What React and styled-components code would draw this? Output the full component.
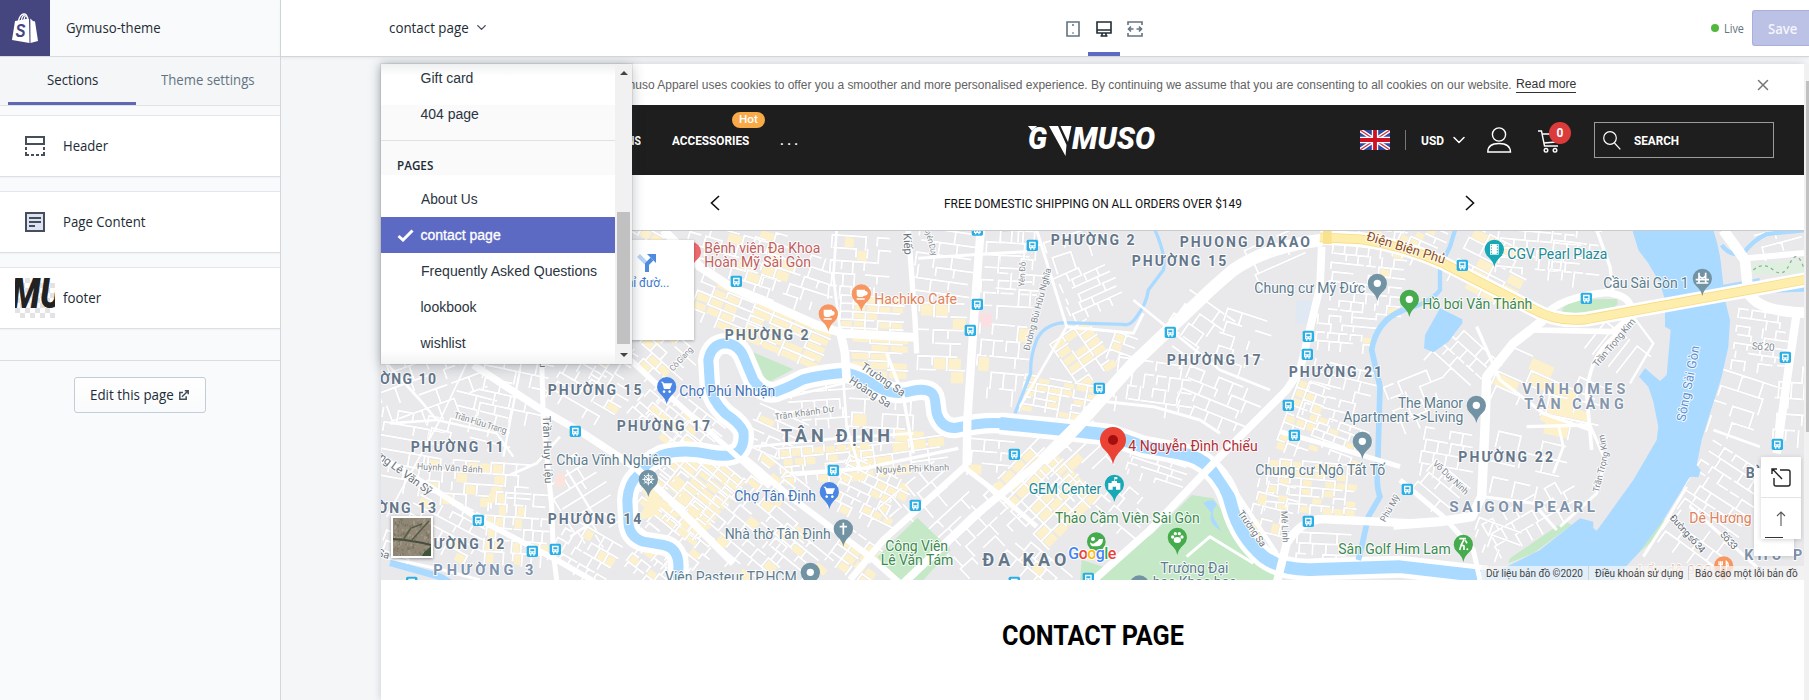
import React, { useLayoutEffect, useRef, useState } from 'react';
import styled, { createGlobalStyle, css } from 'styled-components';
import { ChevronDown, X } from 'lucide-react';

const Global = createGlobalStyle`
  * { box-sizing: border-box; }
  body { margin: 0; background: #fff; overflow: hidden; font-family: "Open Sans", "Noto Sans", sans-serif; color: #212b36; }
  svg { display: block; }
`;

const ui = '"Open Sans", "Noto Sans", sans-serif';
const arial = '"Liberation Sans", Arial, sans-serif';
const roboto = 'Roboto, "Noto Sans", sans-serif';

/* ---------- fitted text ---------- */
const FitBox = styled.span`
  display: inline-block;
  flex: none;
  width: ${(p) => p.$w}px;
  white-space: nowrap;
`;
const FitInner = styled.span`
  display: inline-block;
  transform-origin: 0 50%;
`;
function Fit({ w, children }) {
  const ref = useRef(null);
  const [scale, setScale] = useState(1);
  useLayoutEffect(() => {
    const natural = ref.current.offsetWidth;
    if (natural) setScale(w / natural);
  }, [w]);
  return (
    <FitBox $w={w}>
      <FitInner ref={ref} style={{ transform: `scaleX(${scale})` }}>{children}</FitInner>
    </FitBox>
  );
}

/* ---------- shell ---------- */
const Shell = styled.div`
  display: grid;
  grid-template-columns: 281px 1fr;
  width: 1809px;
  height: 700px;
  overflow: hidden;
`;
const Sidebar = styled.aside`
  display: flex;
  flex-direction: column;
  background: #f9fafb;
  border-right: 1px solid #d3d8de;
`;
const Brand = styled.header`
  display: flex;
  align-items: center;
  height: 57px;
  border-bottom: 1px solid #d8dce1;
  font-size: 14px;
  line-height: 20px;
`;
const BrandTile = styled.div`
  display: grid;
  place-items: center;
  width: 50px;
  height: 56px;
  margin-right: 16px;
  background: #45457f;
`;
const Tabs = styled.nav`
  display: grid;
  grid-template-columns: 128px 128px;
  column-gap: 8px;
  padding: 0 8px;
  height: 49px;
  background: #f4f6f8;
  border-bottom: 1px solid #dfe3e8;
`;
const Tab = styled.div`
  display: flex;
  justify-content: center;
  padding-top: 13px;
  font-size: 14px;
  line-height: 19px;
  color: ${(p) => (p.$active ? '#212b36' : '#637381')};
  border-bottom: ${(p) => (p.$active ? '3px solid #6068b4' : '0')};
`;
const Sections = styled.div`
  display: flex;
  flex-direction: column;
  gap: 14px;
  padding: 9px 0 31px;
  border-bottom: 1px solid #dadee3;
`;
const Section = styled.div`
  display: flex;
  align-items: center;
  height: 62px;
  padding-left: 15px;
  background: #fff;
  border-top: 1px solid #e3e6ea;
  border-bottom: 1px solid #dcdfe3;
  box-shadow: 0 1px 1px rgba(33, 43, 54, 0.04);
  font-size: 14px;
`;
const SectionName = styled.div`
  display: flex;
  padding-bottom: 2px;
`;
const SectionIcon = styled.div`
  display: grid;
  place-items: center;
  width: 40px;
  height: 40px;
  margin-right: 8px;
  overflow: hidden;
`;
const EditButton = styled.button`
  display: flex;
  align-items: center;
  gap: 5px;
  width: 132px;
  height: 36px;
  margin: 16px 0 0 74px;
  padding: 0 0 1px 15px;
  border: 1px solid #c4cdd5;
  border-radius: 3px;
  background: linear-gradient(#fff, #f9fafb);
  font: 14px ${ui};
  color: #212b36;
`;

const Main = styled.main`
  display: flex;
  flex-direction: column;
  min-width: 0;
  background: #f4f6f8;
`;
const TopBar = styled.header`
  position: relative;
  z-index: 3;
  display: flex;
  align-items: center;
  height: 57px;
  padding-left: 108px;
  background: #fff;
  border-bottom: 1px solid #d3d5d8;
  box-shadow: 0 1px 3px rgba(33, 43, 54, 0.08);
`;
const PagePicker = styled.div`
  display: flex;
  align-items: center;
  gap: 5px;
  width: 668px;
  padding-bottom: 2px;
  font-size: 14px;
`;
const Device = styled.div`
  display: flex;
  justify-content: center;
  align-items: center;
  width: 32px;
  height: 56px;
  margin-right: -1px;
  padding-top: ${(p) => (p.$active ? '6px' : '2px')};
  color: ${(p) => (p.$active ? '#212b36' : '#637381')};
  border-bottom: ${(p) => (p.$active ? '4px solid #5c6ac4' : '0')};
`;
const Status = styled.div`
  display: flex;
  align-items: center;
  gap: 5px;
  margin-left: auto;
  font-size: 12.5px;
  color: #637381;
`;
const Dot = styled.i`
  width: 8px;
  height: 8px;
  border-radius: 50%;
  background: #50b83c;
`;
const Save = styled.button`
  flex: none;
  width: 57px;
  height: 36px;
  margin-left: 8px;
  padding: 0 0 0 15px;
  border: 1px solid #a9afdd;
  border-right: 0;
  border-radius: 3px 0 0 3px;
  background: #bcc1e6;
  font: 600 14px ${ui};
  text-align: left;
  color: #f5f6fc;
`;

/* ---------- preview ---------- */
const Stage = styled.div`
  position: relative;
  display: flex;
  flex: 1;
  padding: 7px 0 0 100px;
`;
const Frame = styled.div`
  width: 1423px;
  background: #fff;
  box-shadow: 0 0 8px rgba(33, 43, 54, 0.2);
`;
const PageScroll = styled.div`
  width: 5px;
  padding: 17px 0 0 2px;
  background: #f1f1f1;
`;
const PageThumb = styled.div`
  height: 351px;
  background: #c1c1c1;
`;
const Cookie = styled.div`
  display: flex;
  align-items: center;
  height: 41px;
  padding: 1px 32px 0 229px;
  font: 12px ${arial};
  color: #626262;
`;
const ReadMore = styled.span`
  margin-left: 4px;
  height: 16px;
  line-height: 15px;
  color: #333;
  border-bottom: 1px solid #333;
`;
const CloseIcon = styled.div`
  margin-left: auto;
  color: #777;
`;
const StoreHeader = styled.div`
  display: flex;
  align-items: center;
  height: 70px;
  padding: 0 30px 0 231px;
  background: #1e1e1e;
  font: 700 13px ${roboto};
  color: #fff;
`;
const NavItem = styled.div`
  position: relative;
  display: flex;
  margin-right: 31px;
`;
const Hot = styled.span`
  position: absolute;
  left: 60px;
  top: -21px;
  width: 33px;
  height: 16px;
  padding-left: 7px;
  border-radius: 8px;
  background: #f8aa49;
  font: 500 10.5px/16px ${roboto};
`;
const Dots = styled.div`
  width: 248px;
  letter-spacing: 3.4px;
`;
const HeaderTools = styled.div`
  display: flex;
  align-items: center;
  margin-left: auto;
`;
const Rule = styled.div`
  width: 1px;
  height: 20px;
  margin: 0 15px;
  background: #777;
`;
const ChevronWrap = styled.div`
  margin: 0 18px 0 5px;
`;
const CartWrap = styled.div`
  position: relative;
  margin: 2px 0 0 26px;
`;
const CartBadge = styled.span`
  position: absolute;
  left: 11px;
  top: -7px;
  width: 22px;
  height: 22px;
  border-radius: 50%;
  background: #dc3b3b;
  font: 700 12px/22px ${roboto};
  text-align: center;
`;
const SearchBox = styled.div`
  display: flex;
  align-items: center;
  gap: 13px;
  width: 180px;
  height: 36px;
  margin-left: 34px;
  padding-left: 8px;
  border: 1px solid #9b9b9b;
`;
const Announce = styled.div`
  display: flex;
  align-items: center;
  justify-content: space-between;
  height: 55px;
  padding: 1px 329px 0;
  font: 400 13px ${roboto};
  color: #111;
`;
const MapBox = styled.div`
  position: relative;
  height: 350px;
  overflow: hidden;
  border-top: 1px solid #c9cacd;
`;
const PlaceCard = styled.div`
  position: absolute;
  left: 10px;
  top: 9px;
  width: 303px;
  height: 100px;
  display: flex;
  flex-direction: column;
  align-items: flex-end;
  padding: 13px 25px 0 0;
  background: #fff;
  box-shadow: 0 1px 3px rgba(0, 0, 0, 0.3);
  font: 12px ${roboto};
  color: #3c78d0;
`;
const TurnIcon = styled.div`
  margin: 0 12px 4px 0;
`;
const Satellite = styled.div`
  position: absolute;
  left: 10px;
  bottom: 22px;
  border: 2px solid #fff;
  box-shadow: 0 1px 3px rgba(0, 0, 0, 0.4);
`;
const Credits = styled.div`
  position: absolute;
  right: 0;
  bottom: 0;
  display: flex;
  align-items: center;
  height: 14px;
  padding: 0 6px 0 5px;
  background: rgba(245, 245, 245, 0.74);
  font: 10px ${roboto};
  color: #444;
`;
const CreditRule = styled.i`
  width: 1px;
  height: 14px;
  margin: 0 6px 0 5px;
  background: #ccd3dc;
`;
const ControlBack = styled.div`
  position: absolute;
  left: 1373px;
  top: 237px;
  width: 40px;
  height: 88px;
  background: #fff;
  box-shadow: 0 1px 4px rgba(0, 0, 0, 0.15);
`;
const Controls = styled.div`
  position: absolute;
  left: 1380px;
  top: 226px;
  width: 40px;
  background: #fff;
  box-shadow: 0 1px 5px rgba(0, 0, 0, 0.18);
`;
const Control = styled.div`
  display: grid;
  place-items: center;
  height: 41px;
  border-bottom: ${(p) => (p.$last ? '0' : '1px solid #e4e4e4')};
`;
const MinusMark = styled.div`
  position: absolute;
  left: 4px;
  top: 80px;
  width: 18px;
  height: 1px;
  background: #333;
`;
const Title = styled.h1`
  display: flex;
  justify-content: center;
  margin: 0;
  padding-top: 40px;
  font: 700 27px/32px ${roboto};
  color: #000;
`;

/* ---------- menu ---------- */
const Menu = styled.div`
  position: absolute;
  z-index: 2;
  left: 100px;
  top: 7px;
  display: flex;
  width: 251px;
  height: 300px;
  background: #fff;
  box-shadow: 0 0 0 1px rgba(33, 43, 54, 0.08), 0 2px 12px rgba(33, 43, 54, 0.3);
`;
const MenuList = styled.div`
  display: flex;
  flex-direction: column;
  width: 234px;
  background:
    linear-gradient(rgba(33, 43, 54, 0.07), transparent 12px) no-repeat,
    linear-gradient(to top, rgba(33, 43, 54, 0.06), transparent 14px) no-repeat,
    linear-gradient(transparent 41px, #fafafa 41px, #fafafa 111px, transparent 111px);
  font: 14px ${arial};
`;
const MenuItem = styled.div`
  display: flex;
  flex: none;
  align-items: center;
  height: 36px;
  margin-top: ${(p) => (p.$first ? '-4px' : '0')};
  padding-left: 39.5px;
  color: #2b3541;
  ${(p) => p.$selected && css`
    padding-left: 15.5px;
    gap: 7px;
    background: #5c6ac4;
    color: #fff;
    -webkit-text-stroke: 0.3px #fff;
  `}
`;
const MenuHeading = styled.div`
  flex: none;
  height: 41px;
  margin-top: 8px;
  padding: 16px 0 0 16px;
  border-top: 1px solid #dfe1e4;
  font: 600 12px/17px ${ui};
  color: #212b36;
`;
const MenuScroll = styled.div`
  display: flex;
  flex-direction: column;
  align-items: center;
  width: 17px;
  background: #f1f1f1;
`;
const Arrow = styled.i`
  flex: none;
  width: 0;
  height: 0;
  border: 4px solid transparent;
  ${(p) => (p.$up ? 'border-bottom-color: #444; margin-top: 3px;' : 'border-top-color: #444; margin-top: 9px;')}
`;
const MenuThumb = styled.div`
  width: 13px;
  height: 132px;
  margin-top: 137px;
  background: #c1c1c1;
`;

/* ---------- map ---------- */
// Map drawing uses three units per pixel, split in four horizontal tiles.
const T = { a: [0, 360], b: [780, 0], c: [1890, 0], d: [3090, 0] };
const inTile = (t) => `translate(${T[t][0]} ${T[t][1]})`;

function rng(seed) {
  let s = seed * 9301 + 49297;
  return () => {
    s = (s * 1103515245 + 12345) % 2147483648;
    return s / 2147483648;
  };
}

// tile, centre x, centre y, width, height, angle, cell width, cell height, built-up
const districts = [
  ['a', 190, 130, 330, 240, -20, 52, 46, 0], ['a', 120, 330, 200, 220, 10, 46, 40, 0], ['a', 300, 250, 240, 170, 14, 60, 42, 0],
  ['a', 420, 130, 170, 230, 12, 48, 38, 0], ['a', 330, 430, 320, 130, 4, 38, 34, .35], ['a', 230, 560, 240, 160, 28, 36, 32, .1],
  ['a', 440, 560, 190, 200, 4, 28, 36, .25], ['a', 640, 480, 150, 260, -32, 50, 40, 0], ['a', 640, 640, 180, 150, 30, 30, 36, .2],
  ['a', 660, 170, 230, 150, 30, 42, 28, .12], ['a', 730, 60, 160, 130, -58, 40, 30, .3], ['a', 950, 250, 210, 120, 38, 34, 26, .12],
  ['a', 950, 470, 210, 230, 38, 44, 22, .7], ['a', 850, 680, 150, 100, 38, 34, 28, .2], ['a', 110, 640, 160, 90, 20, 46, 30, 0],
  ['b', 90, 420, 160, 180, 42, 40, 30, .3], ['b', 100, 590, 180, 120, 40, 38, 24, .3],
  ['b', 80, 50, 190, 80, 30, 36, 32, .3], ['b', 310, 90, 280, 170, 16, 50, 34, .1], ['b', 300, 265, 220, 140, 22, 44, 28, .6],
  ['b', 470, 350, 250, 140, 23, 62, 26, .8], ['b', 470, 170, 250, 170, 18, 44, 34, .25], ['b', 690, 150, 180, 200, 4, 34, 38, .1],
  ['b', 730, 290, 200, 120, 3, 38, 24, .7], ['b', 750, 410, 180, 130, 3, 58, 26, .7], ['b', 930, 140, 150, 220, 8, 54, 38, 0],
  ['b', 935, 360, 140, 220, 2, 44, 40, .15], ['b', 1120, 160, 130, 260, 3, 52, 38, .05], ['b', 1110, 440, 140, 250, 5, 38, 48, .05],
  ['b', 560, 560, 240, 150, -4, 38, 28, 0], ['b', 430, 650, 150, 150, 24, 52, 26, .1], ['b', 760, 620, 210, 160, 3, 46, 42, .05],
  ['b', 800, 710, 350, 90, -8, 54, 34, .65], ['b', 580, 730, 260, 110, -5, 34, 28, .5], ['b', 190, 800, 230, 220, 39, 46, 22, .7],
  ['b', 140, 970, 220, 160, 39, 38, 28, .2], ['b', 360, 940, 240, 230, 40, 42, 34, .1], ['b', 430, 790, 150, 110, 38, 42, 26, .3],
  ['b', 710, 830, 200, 180, 26, 34, 28, .5], ['b', 690, 1020, 170, 120, 36, 38, 30, .6], ['b', 870, 850, 210, 140, -40, 54, 42, 0],
  ['b', 1040, 930, 230, 200, -43, 48, 38, .05], ['b', 500, 1010, 170, 120, 39, 44, 28, .2], ['b', 1080, 720, 130, 120, 5, 44, 36, .1],
  ['c', 60, 140, 130, 230, 4, 34, 46, 0], ['c', 270, 210, 170, 150, -24, 40, 24, 0], ['c', 230, 100, 170, 120, -18, 58, 50, 0],
  ['c', 260, 400, 150, 170, -35, 44, 28, .6], ['c', 370, 390, 80, 90, 20, 34, 28, .6], ['c', 170, 540, 210, 120, 10, 38, 22, .6],
  ['c', 450, 510, 210, 170, 8, 38, 40, 0], ['c', 590, 340, 180, 190, 35, 54, 42, 0], ['c', 730, 380, 160, 190, 18, 46, 38, 0],
  ['c', 650, 550, 230, 150, 22, 46, 36, 0], ['c', 840, 110, 180, 120, -24, 54, 40, 0], ['c', 1090, 170, 200, 290, 6, 36, 28, .08],
  ['c', 1030, 340, 160, 100, 5, 34, 26, .1], ['c', 1010, 520, 170, 170, 14, 46, 34, 0], ['c', 910, 590, 100, 210, 20, 32, 28, .55],
  ['c', 1020, 660, 170, 100, 20, 34, 22, .25], ['c', 930, 800, 260, 150, 5, 34, 26, .6], ['c', 820, 880, 130, 180, 14, 30, 38, .15],
  ['c', 120, 820, 200, 240, -45, 44, 32, .6], ['c', 250, 720, 230, 130, -43, 54, 34, .05], ['c', 470, 755, 180, 80, 18, 42, 20, 0],
  ['c', 370, 870, 160, 130, 40, 50, 36, 0], ['c', 110, 1040, 200, 90, 40, 40, 32, .15], ['c', 970, 980, 160, 80, 3, 40, 32, 0],
  ['d', 60, 70, 130, 120, 24, 32, 26, .3], ['d', 270, 150, 200, 190, 27, 52, 36, .7], ['d', 400, 110, 220, 150, 5, 40, 28, .05],
  ['d', 530, 110, 160, 170, 7, 36, 44, 0], ['d', 170, 400, 210, 130, 42, 38, 36, 0], ['d', 70, 530, 200, 140, -22, 46, 38, 0],
  ['d', 150, 700, 170, 130, 10, 38, 36, 0], ['d', 650, 400, 170, 110, 38, 30, 100, 0], ['d', 430, 510, 300, 160, 24, 78, 42, .45],
  ['d', 520, 600, 170, 120, 12, 80, 60, .6], ['d', 380, 740, 210, 170, 13, 68, 46, 0], ['d', 400, 900, 280, 130, -30, 36, 38, 0],
  ['d', 130, 810, 150, 110, 40, 44, 42, 0], ['d', 1080, 360, 150, 170, 8, 40, 26, 0], ['d', 1020, 570, 180, 200, 18, 66, 48, 0],
  ['d', 1180, 560, 110, 240, 4, 38, 48, 0], ['d', 970, 800, 200, 200, 33, 40, 34, 0], ['d', 900, 960, 220, 150, 36, 54, 38, 0],
  ['d', 290, 970, 150, 110, 20, 44, 36, 0], ['d', 1130, 60, 120, 60, -15, 60, 40, 0],
];

function District({ spec, seed }) {
  const [t, x, y, w, h, a, cw, ch, built] = spec;
  const r = rng(seed + 3);
  const blocks = [];
  let d = '';
  const cols = Math.round(w / cw);
  const rows = Math.round(h / ch);
  for (let i = 0; i < cols; i++) {
    for (let j = 0; j < rows; j++) {
      const bx = -w / 2 + i * cw + (j % 2) * cw * 0.2 * (built > 0.5 ? 0 : 1);
      const by = -h / 2 + j * ch;
      if (r() < built) blocks.push(<rect key={`${i}-${j}`} x={bx + 5} y={by + 5} width={cw - 7} height={ch - 7} fill="#fdf1cb" />);
      if (r() < 0.79) d += `M${bx},${by}h${cw * (r() < 0.25 ? 0.65 : 1)}`;
      if (r() < 0.72) d += `M${bx},${by}v${ch * (r() < 0.25 ? 0.6 : 1)}`;
    }
  }
  return (
    <g transform={`${inTile(t)} translate(${x} ${y}) rotate(${a})`}>
      {blocks}
      <path d={d} stroke="#dcdce0" strokeWidth="7.5" fill="none" />
      <path d={d} stroke="#fff" strokeWidth="6" fill="none" strokeLinecap="round" />
    </g>
  );
}

const areas = [
  ['b', 'M370,397 L425,420 L490,448 L410,490Z', '#c5e9c6'],
  ['b', 'M862,893 L962,990 L880,1080 L800,1080 L742,1010Z', '#c5e9c6'],
  ['c', 'M575,825 L640,835 L665,870 L700,950 L760,1010 L840,1050 L820,1080 L240,1080 L245,1020 L310,1040 L460,940Z', '#c5e9c6'],
  ['c', 'M610,850 Q640,830 650,855 Q630,875 645,900 L665,935 L640,915 Q625,895 635,880Z', '#aadaff'],
  ['d', 'M485,275 Q490,245 560,238 L650,237 Q660,255 640,262 L500,285Z', '#c5e9c6'],
  ['d', 'M430,285 L470,262 L470,295Z', '#c5e9c6'],
  ['d', 'M325,1030 L330,1015 L480,912 L500,905 L515,915 L400,1000Z', '#c5e9c6'],
  ['d', 'M715,1000 L720,975 L785,900 L800,905 L760,960Z', '#c5e9c6'],
  ['d', 'M1055,130 L1212,122 L1212,160 L1060,165Z', '#dff0e0'],
  ['a', 'M805,540 L850,440 L880,490 L850,530Z', '#fdf1cb'],
  ['b', 'M1045,280 h40 v40 h-30z', '#fbdfe2'],
  ['a', 'M560,400 h25 v40 h-35z', '#fbe4dd'],
  ['c', 'M890,240 h45 v70 h-50z', '#dfe8f3'],
];
const canalB = 'M145,1100 L145,1050 Q150,985 100,975 L40,965 Q-5,950 -5,900 L-8,840 Q-5,790 25,765 Q50,725 95,705 Q160,685 240,703 Q300,715 325,695 Q345,675 340,635 Q330,610 285,580 Q245,540 240,500 L235,420 Q245,370 290,370 Q330,375 345,420 L370,480 Q400,525 440,515 Q480,500 520,478 Q580,462 650,458 Q700,470 740,500 Q790,530 850,512 Q910,500 915,540 L920,580 Q935,625 975,624 Q1060,605 1120,610';
const canalC = 'M0,610 L200,630 L330,645 L430,680 L540,700 Q600,710 630,745 Q680,790 695,860 Q720,950 790,1010 Q850,1055 950,1048 L1200,1040 L1460,1070';
const bigRiver = 'M697,30 L940,30 Q960,90 965,150 L975,240 L990,300 L985,380 L965,470 L930,580 L905,660 L890,735 L902,750 L895,772 L870,770 L790,900 L715,1000 L640,1080 L240,1080 L330,1035 L420,990 L540,895 L580,905 L580,925 L590,932 L610,905 L700,780 L770,660 L775,620 L760,545 L745,500 L717,470 L735,445 L780,483 L800,465 L812,330 L795,320 L795,240 L780,190 L745,130 L715,90Z';
const streams = [
  ['c', 'M465,30 Q500,110 490,150 L445,210 Q440,250 410,290 Q390,320 370,313 L190,308 Q130,315 110,360 Q90,410 92,460 L45,580', 10],
  ['c', 'M1210,270 Q1130,300 1115,390 L1140,500 L1133,740 Q1128,800 1140,830 L1105,890 L1085,980 L1075,1020', 17],
  ['d', 'M165,30 L150,80 L120,140 L120,210 Q90,250 0,275', 13],
  ['d', 'M965,75 Q990,110 1030,100 Q1060,60 1100,42 L1220,30', 13],
  ['d', 'M960,205 L1080,182', 17], ['d', 'M1070,212 L1220,208', 14],
  ['a', 'M60,668 L210,710 L260,740', 20],
];
const roads = [
  ['a', 'M310,75 L500,200 L640,280 L800,385 L900,480 L1090,670', 22], ['a', 'M0,330 L180,440 L330,540 L560,660 L700,740', 17],
  ['a', 'M515,60 L520,240 L545,500 L550,640 L560,720', 15], ['a', 'M760,40 L900,170 L1080,330 L1200,440', 17],
  ['a', 'M420,405 L500,370 L570,290', 8], ['a', 'M450,90 L400,350', 7], ['a', 'M50,70 L150,180 L200,240 L60,250', 8],
  ['a', 'M40,650 L220,690 L330,720', 9], ['a', 'M200,240 L380,280 L430,350', 7], ['a', 'M290,70 L210,240 L50,530', 5], ['a', 'M590,390 L680,540 L600,590', 7],
  ['b', 'M100,30 L210,140 L300,200 L560,315 L640,340 L860,352', 26], ['b', 'M630,330 L645,400 L650,480', 26],
  ['b', 'M1052,30 L1035,250 L1012,600 L1010,735', 25], ['b', 'M1010,735 L760,960 L660,1080', 20], ['b', 'M1000,740 L1110,825 L1220,920', 15],
  ['b', 'M345,715 L480,830 L600,920 L720,1010 L810,1090', 19], ['b', 'M835,30 L855,300 L860,400', 16], ['b', 'M770,400 L820,530 L850,700', 10],
  ['b', 'M480,760 L700,745 L985,685', 10], ['b', 'M370,680 L620,655 L850,640', 8], ['b', 'M620,30 L610,170 L630,330', 8], ['b', 'M865,115 L1100,100 L1190,95', 9],
  ['b', 'M640,480 L650,620 L690,750', 8], ['b', 'M400,540 L480,530 L640,490', 7],
  ['c', 'M965,60 Q800,80 700,150 Q640,200 600,240 L400,430 L230,620 L130,720', 38], ['c', 'M140,710 L-80,890 L-290,1090', 24],
  ['c', 'M270,1090 L450,930 L650,720 L860,510 L900,450 L960,200 L965,80', 23], ['c', 'M110,30 L200,320 L400,340 L430,280', 9],
  ['c', 'M320,545 L460,560 L600,600 L660,640', 9], ['c', 'M830,1090 L860,970 Q900,905 960,897 L1240,910', 25], ['c', 'M840,635 L1000,680 L1200,740', 15],
  ['c', 'M650,730 L830,1000', 13], ['c', 'M200,320 L130,440 L60,560', 8], ['c', 'M560,1010 L630,950 L760,1030', 9], ['c', 'M400,240 L660,450 L810,510', 8],
  ['d', 'M-20,915 L120,905 L215,890 L245,830 L255,620 L260,470 L340,370 L430,300', 28], ['d', 'M430,290 Q480,230 620,218 Q680,225 690,255', 22],
  ['d', 'M400,330 L640,335 L690,290', 17], ['d', 'M970,30 L1035,120 L1045,220 Q1080,275 1212,278', 32], ['d', 'M1190,280 L1165,450 L1130,700', 25],
  ['d', 'M575,690 L560,520 Q570,420 620,370 L700,290', 11], ['d', 'M570,615 L615,720 L590,820 L480,920', 9], ['d', 'M1040,115 L1220,98', 18],
  ['d', 'M0,780 L130,890 L220,990 L240,1080', 15], ['d', 'M250,830 L400,850 L470,930', 9], ['d', 'M230,320 L300,480 L430,580 L570,630', 10],
  ['d', 'M590,30 L630,140 L640,220', 10], ['d', 'M730,1010 L800,900 L860,800', 9], ['d', 'M870,860 L1080,1050', 10], ['d', 'M700,290 L760,370 L690,490', 7],
  ['d', 'M940,630 L1080,680', 8], ['d', 'M475,615 L490,680 L460,760', 8], ['d', 'M380,620 L570,615', 10],
];
const highway = 'M-240,52 L-120,58 Q20,80 130,130 L400,268 Q470,308 560,298 L760,262 L1222,178';

const slate = '#7293a3';
const blue = '#4a86e4';
const orange = '#f79661';
const green = '#45ab4c';
const teal = '#16a8b4';
const pins = [
  ['b', 694, 222, orange, 'cup'], ['b', 595, 282, orange, 'cup'], ['b', 110, 500, blue, 'cart'], ['b', 55, 778, slate, 'wheel'],
  ['b', 598, 815, blue, 'cart'], ['b', 640, 927, slate, 'cross'], ['b', 541, 1057, slate, 'dot'], ['b', 184, 95, '#ec6a6e', 'none'],
  ['c', 343, 793, teal, 'hall'], ['c', 532, 952, green, 'paw'], ['c', 1132, 190, slate, 'dot'], ['c', 1087, 664, slate, 'dot'], ['c', 418, 1095, slate, 'dot'],
  ['d', 283, 88, teal, 'film'], ['d', 907, 175, slate, 'bridge'], ['d', 28, 238, green, 'dot'], ['d', 229, 556, slate, 'dot'],
  ['d', 190, 973, green, 'golf'], ['d', 971, 1038, orange, 'fork'],
];
const buses = [
  ['b', 319, 184], ['b', 1042, 30], ['b', 1042, 253], ['b', 1021, 331], ['b', 1153, 703], ['b', 610, 751], ['b', 856, 856], ['b', 1153, 1087],
  ['c', 97, 76], ['c', 511, 337], ['c', 298, 505], ['c', 925, 349], ['c', 922, 403], ['c', 865, 556], ['c', 883, 646], ['c', 925, 904], ['c', 265, 1075],
  ['d', 187, 136], ['d', 559, 235], ['d', 1156, 412], ['d', 1132, 673], ['d', 22, 808],
  ['a', 616, 274], ['a', 325, 541], ['a', 487, 634], ['a', 556, 628], ['a', 125, 727],
];

const ward = '#64778a';
const poi = '#5e7d8e';
const road = '#6e7780';
// tile, x, baseline, width, text, size, colour, weight, rotation
const labels = [
  ['a', -70, 131, 268, 'PHƯỜNG 10', 42, ward, 700], ['a', 533, 165, 282, 'PHƯỜNG 15', 42, ward, 700], ['a', 740, 273, 280, 'PHƯỜNG 17', 42, ward, 700],
  ['a', 122, 336, 279, 'PHƯỜNG 11', 42, ward, 700], ['a', -82, 519, 280, 'PHƯỜNG 13', 42, ward, 700], ['a', 533, 552, 281, 'PHƯỜNG 14', 42, ward, 700],
  ['a', 122, 627, 281, 'PHƯỜNG 12', 42, ward, 700], ['a', 190, 705, 300, 'PHƯỜNG 3', 44, '#7c92ae', 700],
  ['a', 559, 376, 345, 'Chùa Vĩnh Nghiêm', 42, poi, 400], ['a', 885, 726, 395, 'Viện Pasteur TP.HCM', 42, poi, 400],
  ['a', 250, 233, 165, 'Trần Hữu Trang', 27, '#868b91', 400, 17], ['a', 140, 388, 198, 'Huỳnh Văn Bánh', 27, '#868b91', 400, 3],
  ['a', 518, 228, 203, 'Trần Huy Liệu', 33, road, 400, 88], ['a', -25, 320, 248, 'Đường Lê Văn Sỹ', 34, road, 400, 36], ['a', -22, 635, 80, 'ng Sa', 32, road, 400, 16],
  ['a', 909, 95, 90, 'Cô Giang', 25, '#868b91', 400, -47], ['a', 509, 35, 48, 'Kiệu', 28, road, 400, 89],
  ['b', 223, 99, 348, 'Bệnh viện Đa Khoa', 42, '#c1605d', 400], ['b', 223, 142, 320, 'Hoàn Mỹ Sài Gòn', 42, '#c1605d', 400],
  ['b', 733, 252, 248, 'Hachiko Cafe', 42, '#e0825a', 400], ['b', 284, 360, 252, 'PHƯỜNG 2', 42, ward, 700],
  ['b', 148, 528, 288, 'Chợ Phú Nhuận', 42, '#4374b8', 400], ['b', 453, 666, 327, 'TÂN ĐỊNH', 54, ward, 700],
  ['b', 313, 843, 245, 'Chợ Tân Định', 42, '#4374b8', 400], ['b', 284, 957, 318, 'Nhà thờ Tân Định', 42, poi, 400],
  ['b', 766, 992, 188, 'Công Viên', 42, '#3c8a50', 400], ['b', 752, 1035, 218, 'Lê Văn Tám', 42, '#3c8a50', 400],
  ['b', 1057, 1037, 252, 'ĐA KAO', 54, ward, 700], ['b', 435, 600, 180, 'Trần Khánh Dư', 27, '#868b91', 400, -8], ['b', 738, 759, 220, 'Nguyễn Phi Khanh', 27, '#868b91', 400, -2],
  ['b', 690, 445, 153, 'Trường Sa', 33, road, 400, 34], ['b', 655, 487, 142, 'Hoàng Sa', 33, road, 400, 33],
  ['b', 820, 40, 65, 'Kiếp', 34, road, 400, 87], ['b', 884, 28, 84, 'uyên Duy', 25, '#868b91', 400, 75], ['b', 1183, 200, 75, 'Yên Đỗ', 25, '#868b91', 400, -87],
  ['c', 152, 74, 252, 'PHƯỜNG 2', 42, ward, 700], ['c', 539, 81, 391, 'PHUONG DAKAO', 42, ward, 700], ['c', 395, 138, 284, 'PHƯỜNG 15', 42, ward, 700],
  ['c', 763, 219, 332, 'Chung cư Mỹ Đức', 42, poi, 400], ['c', 500, 434, 282, 'PHƯỜNG 17', 42, ward, 700], ['c', 866, 471, 280, 'PHƯỜNG 21', 42, ward, 700],
  ['c', 766, 765, 390, 'Chung cư Ngô Tất Tố', 42, poi, 400], ['c', 385, 693, 388, '4 Nguyễn Đình Chiểu', 42, '#b52d35', 400],
  ['c', 86, 822, 218, 'GEM Center', 42, '#1b8b98', 400], ['c', 165, 908, 434, 'Thảo Cầm Viên Sài Gòn', 42, '#3c8a50', 400],
  ['c', 481, 1059, 204, 'Trường Đại', 42, poi, 400], ['c', 458, 1100, 252, 'học Khoa học', 42, poi, 400],
  ['c', 1015, 1003, 337, 'Sân Golf Him Lam', 42, '#3c8a50', 400], ['c', 88, 393, 255, 'Đường Bùi Hữu Nghĩa', 27, '#7e8790', 400, -75],
  ['c', 712, 880, 125, 'Trường Sa', 29, road, 400, 55], ['c', 843, 873, 95, 'Mê Linh', 27, '#7e8790', 400, 87], ['c', 1155, 908, 90, 'Phú Mỹ', 27, '#7e8790', 400, -60],
  ['d', -103, 60, 245, 'Điện Biên Phủ', 39, '#8b4b20', 400, 17], ['d', 322, 117, 300, 'CGV Pearl Plaza', 42, '#1b8b98', 400],
  ['d', 610, 204, 256, 'Cầu Sài Gòn 1', 42, poi, 400], ['d', 67, 266, 330, 'Hồ bơi Văn Thánh', 42, '#3c8a50', 400],
  ['d', 367, 522, 309, 'VINHOMES', 43, '#8596ad', 700], ['d', 373, 567, 298, 'TÂN CẢNG', 43, '#8596ad', 700],
  ['d', -6, 563, 195, 'The Manor', 42, poi, 400], ['d', -170, 606, 360, 'Apartment >>Living', 42, poi, 400],
  ['d', 175, 726, 284, 'PHƯỜNG 22', 42, ward, 700], ['d', 148, 877, 437, 'SAIGON PEARL', 46, '#8092aa', 700],
  ['d', 868, 909, 187, 'Dê Hương', 42, '#e0825a', 400], ['d', 1037, 774, 44, 'BÌ', 42, ward, 700], ['d', 1033, 1020, 174, 'KHU P', 43, '#8092aa', 700],
  ['d', 855, 606, 230, 'Sông Sài Gòn', 38, '#5d8fd2', 400, -79], ['d', 1055, 388, 68, 'Số 20', 30, '#7e8790', 400, 4],
  ['d', 592, 443, 180, 'Trần Trọng Kim', 29, '#7e8790', 400, -50], ['d', 596, 818, 125, 'Trần Trọng', 27, '#7e8790', 400, -76], ['d', 622, 688, 46, 'Kim', 27, '#7e8790', 400, -103],
  ['d', 97, 733, 135, 'Võ Duy Ninh', 27, '#7e8790', 400, 43], ['d', 808, 895, 142, 'Đường số 34', 29, '#59636c', 400, 48], ['d', 959, 945, 62, 'Số 33', 29, '#59636c', 400, 48],
  ['d', 715, 1062, 220, 'Lẩu dê 909', 40, '#e9b79f', 400],
];

const glyphs = {
  dot: <circle r="11" fill="#fff" />,
  none: null,
  cup: <path d="M-14,-13h25v4q8,0 8,7t-11,7q-3,4-8,4h-6q-8,0-8-9zM-14,13h24v4h-24z" fill="#fff" />,
  cart: <path d="M-18,-15h7l3,5h25l-7,17h-18l-5,-17zM-8,11a4,4 0 1 0 .1,0M9,11a4,4 0 1 0 .1,0" fill="#fff" />,
  cross: <path d="M0,-19v36M-11,-7h22" stroke="#fff" strokeWidth="5" />,
  wheel: <g fill="none" stroke="#fff" strokeWidth="3"><circle r="12" /><circle r="3" /><path d="M0,-18v36M-18,0h36M-13,-13l26,26M13,-13l-26,26" /></g>,
  hall: <path d="M0,-22h9v7h-7v5h6v6h10v20h-13v-9h-10v9h-13v-20h10v-6h8z" fill="#fff" />,
  paw: <g fill="#fff"><ellipse cy="8" rx="11" ry="9" /><circle cx="-14" cy="-1" r="5" /><circle cx="14" cy="-1" r="5" /><circle cx="-6" cy="-11" r="5" /><circle cx="6" cy="-11" r="5" /></g>,
  film: <g><rect x="-13" y="-16" width="26" height="32" fill="#fff" /><path d="M-9,-14v28M9,-14v28" stroke={teal} strokeWidth="3" strokeDasharray="4 4" /></g>,
  bridge: <path d="M-10,-17v32M10,-17v32M-20,4h40M-18,14h36M-10,-8q10,14 20,0" stroke="#fff" strokeWidth="5" fill="none" />,
  golf: <g><path d="M-12,-17h20M2,-14l-8,15l8,4v12M-6,1l-5,16M6,-12l5,9" stroke="#fff" strokeWidth="5" fill="none" /><circle cx="12" cy="15" r="3" fill="#fff" /></g>,
  fork: <path d="M-9,-14v28M-14,-14v10h10v-10M8,14v-28q6,4 6,14h-6" stroke="#fff" strokeWidth="4" fill="none" />,
};

function CityMap() {
  return (
    <svg width="1423" height="349" viewBox="33 33 4269 1047">
      <rect x="33" y="30" width="4269" height="1050" fill="#e9e9ec" />
      {districts.map((d, i) => <District key={i} spec={d} seed={i} />)}
      {areas.map(([t, d, fill], i) => <path key={i} d={d} fill={fill} transform={inTile(t)} />)}
      <g fill="none" stroke="#fff" strokeLinejoin="round">
        <path d={canalB} transform={inTile('b')} strokeWidth="62" />
        <path d={canalC} transform={inTile('c')} strokeWidth="66" />
      </g>
      <g fill="none" stroke="#aadaff" strokeLinejoin="round">
        <path d={canalB} transform={inTile('b')} strokeWidth="30" />
        <path d={canalC} transform={inTile('c')} strokeWidth="38" />
        {streams.map(([t, d, w], i) => <path key={i} d={d} strokeWidth={w} transform={inTile(t)} />)}
      </g>
      <g fill="#aadaff" transform={inTile('d')}>
        <path d={bigRiver} />
        <path d="M120,265 L187,298 L187,310 L145,365 L100,397 L72,385 L75,345Z" />
      </g>
      <g fill="none" stroke="#fff" strokeLinejoin="round">
        {roads.map(([t, d, w], i) => <path key={i} d={d} strokeWidth={w} transform={inTile(t)} />)}
      </g>
      <g fill="none" transform={inTile('d')}>
        <path d={highway} stroke="#fff" strokeWidth="44" />
        <path d={highway} stroke="#f9dc86" strokeWidth="29" />
        <path d={highway} stroke="#feeeae" strokeWidth="24" />
        <path d="M-218,30v42" stroke="#f9e28f" strokeWidth="26" />
        <path d="M1060,150 q30,-25 60,0 t50,-20 t40,10" stroke="#86b98d" strokeWidth="4" strokeDasharray="9 10" />
      </g>
      {buses.map(([t, x, y], i) => (
        <g key={i} transform={`${inTile(t)} translate(${x} ${y})`}>
          <rect x="-17" y="-17" width="34" height="34" rx="5" fill="#29afe5" />
          <path d="M-10,-11h20v20h-3v4h-4v-4h-6v4h-4v-4h-3z" fill="#fff" />
          <path d="M-6,-6h12v6h-12zM-6,3h3v3h-3zM3,3h3v3h-3z" fill="#29afe5" />
        </g>
      ))}
      {pins.map(([t, x, y, color, glyph], i) => (
        <g key={i} transform={`${inTile(t)} translate(${x} ${y})`}>
          <path d="M0,53 Q-3,36 -19,22 A29,29 0 1 1 19,22 Q3,36 0,53Z" fill={color} />
          {glyphs[glyph]}
        </g>
      ))}
      <g transform="translate(2179 965)">
        <circle r="28" fill={green} />
        <path d="M-18,2q8,8 16,0q8,-3 10,-10h12q0,20-16,22h-16q-8-4-6-12z" fill="#fff" />
        <circle cx="-10" cy="-8" r="6" fill="#fff" />
      </g>
      <g transform="translate(2229 660)">
        <path d="M0,74 Q-4,50 -25,30 A39,39 0 1 1 25,30 Q4,50 0,74Z" fill="#ea4335" />
        <circle r="15" fill="#a50e0e" />
      </g>
      {labels.map(([t, x, y, w, text, size, color, weight, rot = 0], i) => (
        <text
          key={i}
          transform={`${inTile(t)} translate(${x} ${y}) rotate(${rot})`}
          textLength={w}
          fontFamily={roboto}
          fontSize={size}
          fontWeight={weight}
          fill={color}
          stroke="#fff"
          strokeOpacity=".85"
          strokeWidth="6"
          strokeLinejoin="round"
          paintOrder="stroke"
        >
          {text}
        </text>
      ))}
      <text x="2095" y="1018" textLength="144" fontFamily={roboto} fontSize="48" fontWeight="500" stroke="#fff" strokeWidth="6" paintOrder="stroke">
        <tspan fill="#4285f4">G</tspan><tspan fill="#ea4335">o</tspan><tspan fill="#fbbc05">o</tspan><tspan fill="#4285f4">g</tspan><tspan fill="#34a853">l</tspan><tspan fill="#ea4335">e</tspan>
      </text>
    </svg>
  );
}

/* ---------- drawings ---------- */
const Bag = () => (
  <svg width="26" height="30" viewBox="0 0 26 30">
    <path d="M3 8 17 5.5 17.5 30 0 27Z M18.3 5.5 21 8 23 8.5 26 28 18.5 30Z" fill="#fff" />
    <path d="M6.5 8Q8 1.5 11.5 1Q15 .5 15.5 6M9.5 7Q10 2.5 13 1.8M12 7Q13 0 16 5" fill="none" stroke="#fff" strokeWidth="1.3" />
    <text x="3.5" y="24" fontFamily={arial} fontSize="18" fontWeight="700" fontStyle="italic" fill="#45457f" textLength="10" lengthAdjust="spacingAndGlyphs">S</text>
  </svg>
);
const HeaderIcon = () => (
  <svg width="20" height="20" viewBox="0 0 20 20" fill="none" stroke="#454f5b" strokeWidth="2">
    <path d="M1 1H19V8H1Z" />
    <path d="M1 11V14M19 11V14M1 16V19H4M19 16V19H16M6 19H9M11 19H14" />
  </svg>
);
const ContentIcon = () => (
  <svg width="20" height="20" viewBox="0 0 20 20" stroke="#454f5b" strokeWidth="2">
    <path d="M1 1H19V19H1Z" fill="#dde3f0" />
    <path d="M4 6H16M4 10H16M4 14H10" />
  </svg>
);
const FooterThumb = () => (
  <svg width="40" height="40" viewBox="0 0 40 40">
    <defs>
      <pattern id="checks" width="10" height="10" patternUnits="userSpaceOnUse">
        <rect width="10" height="10" fill="#fff" /><path d="M0 0h5v5h-5zM5 5h5v5h-5z" fill="#e3e3e6" />
      </pattern>
    </defs>
    <rect width="40" height="40" fill="url(#checks)" />
    <text x="-4" y="30" fontFamily={roboto} fontSize="42" fontWeight="900" fontStyle="italic" fill="#222" textLength="51" lengthAdjust="spacingAndGlyphs">MU</text>
  </svg>
);
const External = () => (
  <svg width="10" height="10" viewBox="0 0 10 10" fill="none" stroke="#454f5b" strokeWidth="1.5">
    <path d="M4 2.5H.8V9.2H7.2V6.3M3 6.7 8.7 1.2M5.8.8H9.2V4.2" />
  </svg>
);
const Phone = () => (
  <svg width="14" height="16" viewBox="0 0 14 16" fill="none" stroke="currentColor" strokeWidth="1.6">
    <path d="M1 1H13V15H1Z" /><path d="M6 4H8M6.3 12H7.7" />
  </svg>
);
const Desktop = () => (
  <svg width="16" height="16" viewBox="0 0 16 16" fill="none" stroke="currentColor" strokeWidth="1.6">
    <path d="M1 1H15V12H1ZM1 9H15M4.5 15H11.5M6 12V15M10 12V15" />
  </svg>
);
const Wide = () => (
  <svg width="16" height="16" viewBox="0 0 16 16" fill="none" stroke="currentColor" strokeWidth="1.6">
    <path d="M1 4V1H15V4M1 12V15H15V12M6.5 8H1.5M9.5 8H14.5M4 5.5 1.5 8 4 10.5M12 5.5 14.5 8 12 10.5" />
  </svg>
);
const Logo = () => (
  <svg width="132" height="40" viewBox="0 -5 132 40" fill="#fff">
    <g fontFamily={roboto} fontWeight="900" fontStyle="italic" fontSize="32">
      <text x="0" y="24" textLength="19" lengthAdjust="spacingAndGlyphs">G</text>
      <text x="44" y="24" textLength="83" lengthAdjust="spacingAndGlyphs">MUSO</text>
    </g>
    <path d="M0 1H9L4 6Z" />
    <path d="M21 1H30L38.5 20 37.5 31Z M32.5 1H43.5L40 17Z" />
  </svg>
);
const Flag = () => (
  <svg width="30" height="20" viewBox="0 0 30 20">
    <path d="M0 0H30V20H0Z" fill="#2e4a9e" />
    <path d="M0 0 30 20M30 0 0 20" stroke="#fff" strokeWidth="4" />
    <path d="M0 0 30 20M30 0 0 20" stroke="#d03448" strokeWidth="1.3" />
    <path d="M15 0V20M0 10H30" stroke="#fff" strokeWidth="6.4" />
    <path d="M15 0V20M0 10H30" stroke="#cf1124" strokeWidth="3.8" />
  </svg>
);
const Person = () => (
  <svg width="25" height="26" viewBox="0 0 25 26" fill="none" stroke="#fff" strokeWidth="1.4">
    <circle cx="12" cy="7.5" r="6.6" /><path d="M.8 25Q.8 16.5 12 16.5T23.5 25Z" />
  </svg>
);
const Cart = () => (
  <svg width="22" height="24" viewBox="0 0 22 24" fill="none" stroke="#fff" strokeWidth="1.4">
    <path d="M0 2H3.5L6.5 17H20M4.5 5H20L18 13 6 14" /><circle cx="8" cy="21.3" r="1.8" /><circle cx="17" cy="21.3" r="1.8" />
  </svg>
);
const Glass = () => (
  <svg width="18" height="19" viewBox="0 0 18 19" fill="none" stroke="#fff" strokeWidth="1.2">
    <circle cx="7" cy="7" r="6.3" /><path d="M11.5 12 17.3 18.3" />
  </svg>
);
const Angle = ({ right }) => (
  <svg width="10" height="16" viewBox="0 0 10 16" fill="none" stroke="#111" strokeWidth="1.6">
    <path d={right ? 'M1 1 8.5 8 1 15' : 'M9 1 1.5 8 9 15'} />
  </svg>
);
const Turn = () => (
  <svg width="20" height="19" viewBox="0 0 20 19" fill="none">
    <path d="M9 10 1.5 2.5" stroke="#b8d3f5" strokeWidth="4" />
    <path d="M10 19V11L15 6" stroke="#4f8bdc" strokeWidth="4" /><path d="M10 1H19V10Z" fill="#4f8bdc" />
  </svg>
);
const Aerial = () => {
  const r = rng(12);
  return (
    <svg width="38" height="38" viewBox="0 0 38 38">
      <rect width="38" height="38" fill="#8f8675" />
      {Array.from({ length: 230 }, (_, i) => (
        <rect key={i} x={r() * 38} y={r() * 38} width={1 + r()} height={1 + r() * 2} fill={['#a59a86', '#7c7564', '#958a76'][i % 3]} />
      ))}
      <path d="M0 21 12 22 30 25 38 27" stroke="#454d3e" strokeWidth="2" fill="none" />
      <path d="M10 22 18 10 29 6M18 23 36 3" stroke="#545a48" strokeWidth="1.5" fill="none" />
      <path d="M38 28V38H29Q31 33 34 32Z" fill="#3e5539" />
    </svg>
  );
};
const Resize = () => (
  <svg width="20" height="19" viewBox="0 0 20 19" fill="none" stroke="#222" strokeWidth="1.4">
    <path d="M9 2H17Q19 2 19 4V16Q19 18 17 18H5Q3 18 3 16V10M11 11 1.5 1M1 6V1H6" />
  </svg>
);
const Up = () => (
  <svg width="10" height="15" viewBox="0 0 10 15" fill="none" stroke="#555" strokeWidth="1.1"><path d="M5 15V1M1 5 5 1 9 5" /></svg>
);
const Check = () => (
  <svg width="17" height="13" viewBox="0 0 17 13" fill="none" stroke="#fff" strokeWidth="3"><path d="M1.5 7 6 11 15.5 1.5" /></svg>
);

const sections = [
  { name: 'Header', w: 45, Icon: HeaderIcon },
  { name: 'Page Content', w: 83, Icon: ContentIcon },
  { name: 'footer', w: 38, Icon: FooterThumb },
];
const menuPages = [
  { label: 'About Us', w: 57 },
  { label: 'contact page', w: 80, selected: true },
  { label: 'Frequently Asked Questions', w: 176 },
  { label: 'lookbook', w: 56 },
  { label: 'wishlist', w: 45 },
];

export default function App() {
  return (
    <>
      <Global />
      <Shell>
        <Sidebar>
          <Brand>
            <BrandTile><Bag /></BrandTile>
            <Fit w={95}>Gymuso-theme</Fit>
          </Brand>
          <Tabs>
            <Tab $active><Fit w={51}>Sections</Fit></Tab>
            <Tab><Fit w={94}>Theme settings</Fit></Tab>
          </Tabs>
          <Sections>
            {sections.map(({ name, w, Icon }) => (
              <Section key={name}>
                <SectionIcon><Icon /></SectionIcon>
                <SectionName><Fit w={w}>{name}</Fit></SectionName>
              </Section>
            ))}
          </Sections>
          <EditButton><Fit w={84}>Edit this page</Fit><External /></EditButton>
        </Sidebar>
        <Main>
          <TopBar>
            <PagePicker><Fit w={80}>contact page</Fit><ChevronDown size={15} strokeWidth={2.2} color="#454f5b" /></PagePicker>
            <Device><Phone /></Device>
            <Device $active><Desktop /></Device>
            <Device><Wide /></Device>
            <Status><Dot /><Fit w={20}>Live</Fit></Status>
            <Save><Fit w={29}>Save</Fit></Save>
          </TopBar>
          <Stage>
            <Menu>
              <MenuList>
                <MenuItem $first><Fit w={53}>Gift card</Fit></MenuItem>
                <MenuItem><Fit w={58}>404 page</Fit></MenuItem>
                <MenuHeading><Fit w={36}>PAGES</Fit></MenuHeading>
                {menuPages.map((m) => (
                  <MenuItem key={m.label} $selected={m.selected}>
                    {m.selected && <Check />}
                    <Fit w={m.w}>{m.label}</Fit>
                  </MenuItem>
                ))}
              </MenuList>
              <MenuScroll><Arrow $up /><MenuThumb /><Arrow /></MenuScroll>
            </Menu>
            <Frame>
              <Cookie>
                <Fit w={902}>Gymuso Apparel uses cookies to offer you a smoother and more personalised experience. By continuing we assume that you are consenting to all cookies on our website.</Fit>
                <ReadMore><Fit w={60}>Read more</Fit></ReadMore>
                <CloseIcon><X size={18} strokeWidth={2} /></CloseIcon>
              </Cookie>
              <StoreHeader>
                <NavItem><Fit w={29}>MENS</Fit></NavItem>
                <NavItem><Fit w={77}>ACCESSORIES</Fit><Hot><Fit w={19}>Hot</Fit></Hot></NavItem>
                <Dots>...</Dots>
                <Logo />
                <HeaderTools>
                  <Flag />
                  <Rule />
                  <Fit w={23}>USD</Fit>
                  <ChevronWrap><ChevronDown size={20} strokeWidth={1.8} /></ChevronWrap>
                  <Person />
                  <CartWrap><Cart /><CartBadge>0</CartBadge></CartWrap>
                  <SearchBox><Glass /><Fit w={45}>SEARCH</Fit></SearchBox>
                </HeaderTools>
              </StoreHeader>
              <Announce>
                <Angle />
                <Fit w={298}>FREE DOMESTIC SHIPPING ON ALL ORDERS OVER $149</Fit>
                <Angle right />
              </Announce>
              <MapBox>
                <CityMap />
                <PlaceCard><TurnIcon><Turn /></TurnIcon><Fit w={50}>Chỉ đườ...</Fit></PlaceCard>
                <Satellite><Aerial /></Satellite>
                <ControlBack />
                <Credits>
                  <Fit w={97}>Dữ liệu bản đồ ©2020</Fit><CreditRule />
                  <Fit w={88}>Điều khoản sử dụng</Fit><CreditRule />
                  <Fit w={103}>Báo cáo một lỗi bản đồ</Fit>
                </Credits>
                <Controls>
                  <Control><Resize /></Control>
                  <Control $last><Up /></Control>
                  <MinusMark />
                </Controls>
              </MapBox>
              <Title><Fit w={182}>CONTACT PAGE</Fit></Title>
            </Frame>
            <PageScroll><PageThumb /></PageScroll>
          </Stage>
        </Main>
      </Shell>
    </>
  );
}
